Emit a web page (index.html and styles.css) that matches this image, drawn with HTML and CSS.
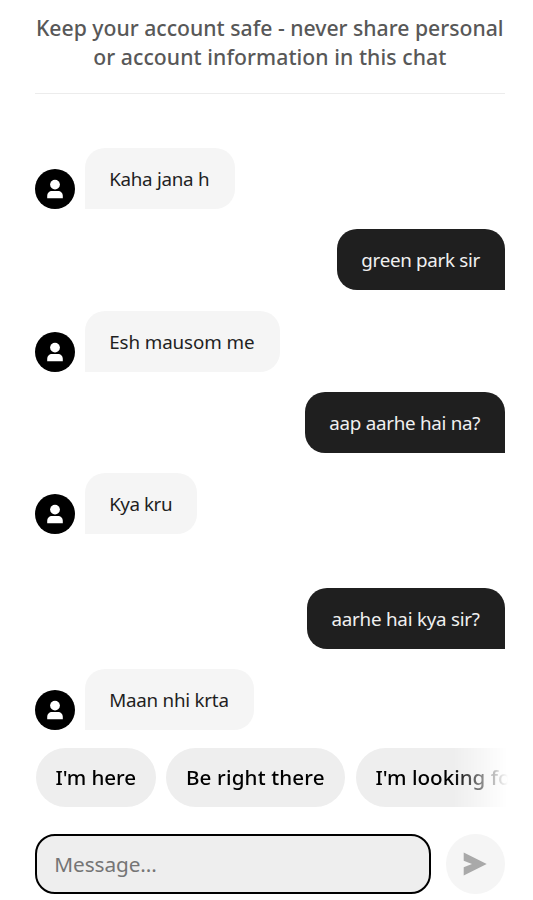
FILE: index.html
```
<!DOCTYPE html>
<html lang="en">
<head>
<meta charset="utf-8">
<meta name="viewport" content="width=device-width, initial-scale=1">
<title>Chat</title>
<link rel="stylesheet" href="styles.css">
</head>
<body>
<svg width="0" height="0" class="defs">
  <symbol id="person" viewBox="0 0 40 40">
    <circle cx="20" cy="15.6" r="4.9"/>
    <path d="M12.2 29.2v-2.3c0-3 2-5 5-5h5.6c3 0 5 2 5 5v2.3z"/>
  </symbol>
</svg>
<div class="chat">
  <header class="notice">
    <div class="notice-line">Keep your account safe - never share personal</div>
    <div class="notice-line second">or account information in this chat</div>
  </header>
  <main class="messages">
    <div class="row"><svg class="avatar"><use href="#person"/></svg><div class="bubble in t1">Kaha jana h</div></div>
    <div class="row mine"><div class="bubble out t2">green park sir</div></div>
    <div class="row"><svg class="avatar"><use href="#person"/></svg><div class="bubble in t3">Esh mausom me</div></div>
    <div class="row mine"><div class="bubble out t4">aap aarhe hai na?</div></div>
    <div class="row"><svg class="avatar"><use href="#person"/></svg><div class="bubble in t5">Kya kru</div></div>
    <div class="row mine later"><div class="bubble out t6">aarhe hai kya sir?</div></div>
    <div class="row"><svg class="avatar"><use href="#person"/></svg><div class="bubble in t7">Maan nhi krta</div></div>
  </main>
  <div class="replies">
    <button class="chip here">I'm here</button>
    <button class="chip right">Be right there</button>
    <button class="chip looking">I'm looking for you</button>
  </div>
  <form class="composer">
    <input class="field" type="text" placeholder="Message..." aria-label="Message">
    <button class="send" type="button" aria-label="Send">
      <svg width="24" height="24" viewBox="0 0 24 24"><path d="M.7.5 23.7 12 .7 23.5v-8.3L9 12 .7 8.8z"/></svg>
    </button>
  </form>
</div>
</body>
</html>
```
FILE: styles.css
```
* { box-sizing: border-box; }
body {
  margin: 0;
  background: #fff;
  font-family: "Noto Sans", "Liberation Sans", sans-serif;
  overflow: hidden;
}
.defs { position: absolute; }
.chat {
  width: 470.5px;
  height: 900px;
  margin-left: 34.5px;
  display: flex;
  flex-direction: column;
}
.notice {
  height: 94px;
  flex: none;
  padding-top: 12.5px;
  border-bottom: 1.5px solid #ececec;
  color: #585858;
  font-size: 21.2px;
  font-weight: 500;
  line-height: 29px;
  text-align: center;
  white-space: nowrap;
}
.second { letter-spacing: 0.06px; }
.messages {
  height: 636px;
  flex: none;
  padding-top: 54px;
  display: flex;
  flex-direction: column;
  gap: 20.3px;
}
.row { display: flex; align-items: flex-end; gap: 10px; height: 61px; flex: none; }
.mine { justify-content: flex-end; }
.later { margin-top: 33.2px; }
.avatar { width: 40px; height: 40px; border-radius: 50%; background: #000; fill: #fff; flex: none; }
.bubble {
  height: 61px;
  padding: 1px 0 0 24.7px;
  font-size: 18.8px;
  line-height: 61px;
  white-space: nowrap;
}
.in { background: #f5f5f5; color: #1f1f1f; border-radius: 20px 20px 20px 0; }
.out { background: #1f1f1f; color: #f0f0f0; border-radius: 20px 20px 0 20px; }
.t1 { width: 150px; letter-spacing: -0.28px; }
.t2 { width: 168.4px; letter-spacing: -0.3px; }
.t3 { width: 195px; letter-spacing: -0.1px; }
.t4 { width: 200.4px; letter-spacing: -0.28px; }
.t5 { width: 112.5px; letter-spacing: -0.45px; }
.t6 { width: 198.2px; letter-spacing: -0.24px; }
.t7 { width: 169.5px; letter-spacing: -0.24px; }
.replies {
  width: 473px;
  height: 60px;
  flex: none;
  margin-top: 17.7px;
  padding-left: 1px;
  display: flex;
  gap: 10.5px;
  overflow: hidden;
  -webkit-mask-image: linear-gradient(to right, #000 418px, transparent 473px);
  mask-image: linear-gradient(to right, #000 418px, transparent 473px);
}
.chip {
  flex: none;
  height: 59px;
  padding: 0 0 0 20px;
  border: 0;
  border-radius: 30px;
  background: #eee;
  color: #000;
  font: 500 20.6px/59px "Noto Sans", sans-serif;
  text-align: left;
  white-space: nowrap;
}
.here { width: 120px; letter-spacing: -0.1px; }
.right { width: 179px; letter-spacing: 0.15px; }
.looking { width: 220px; }
.composer {
  display: flex;
  gap: 15px;
  margin: 26.5px 0 0;
}
.field {
  width: 396px;
  height: 60px;
  padding: 0 17.8px;
  border: 2.5px solid #000;
  border-radius: 20px;
  background: #eee;
  font: 20.8px "Noto Sans", sans-serif;
  letter-spacing: -0.1px;
  outline: 0;
}
.field::placeholder { color: #757575; opacity: 1; }
.send {
  width: 59.5px;
  height: 60px;
  padding: 0;
  border: 0;
  border-radius: 50%;
  background: #f5f5f5;
  display: grid;
  place-items: center;
}
.send svg { fill: #a9a9a9; }
```
